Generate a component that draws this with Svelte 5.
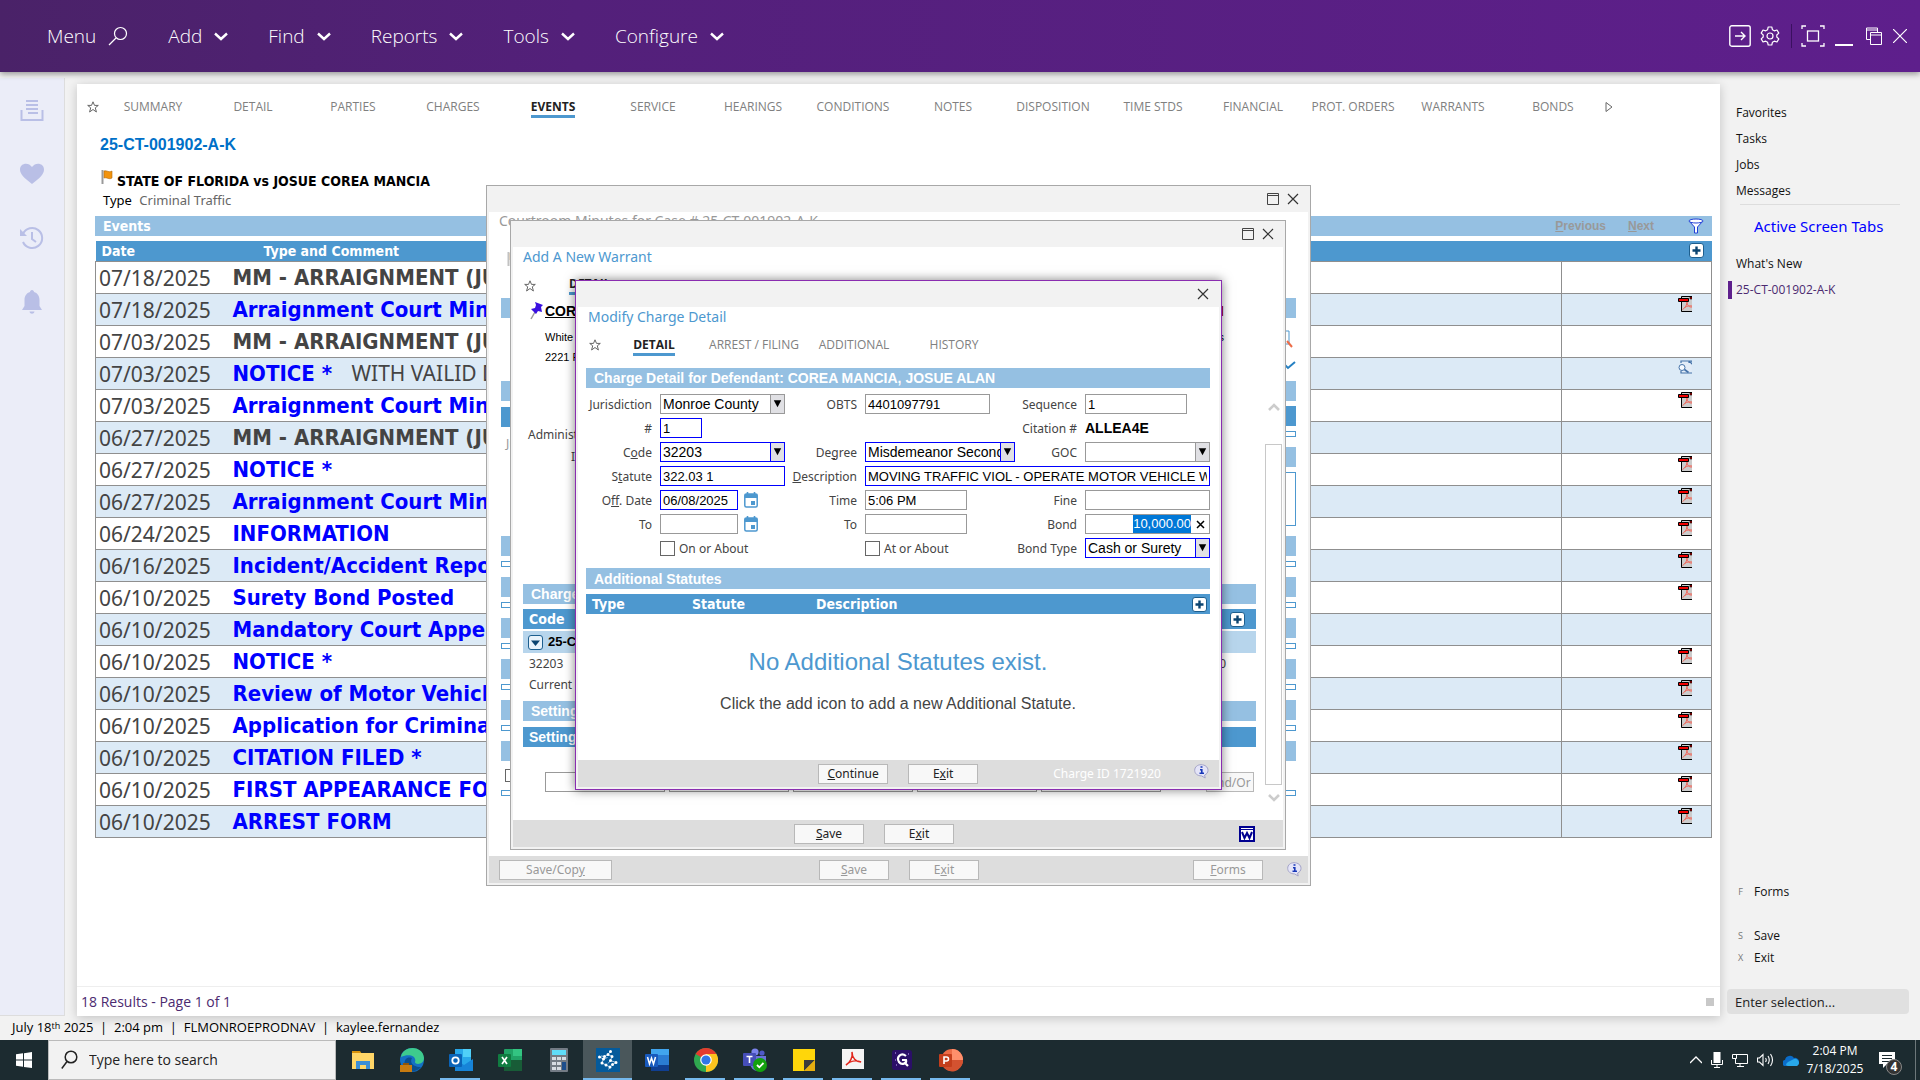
<script lang="ts">
    import { onMount } from 'svelte';

    const menus = ['Add', 'Find', 'Reports', 'Tools', 'Configure'];
    const tabs = [
        'SUMMARY', 'DETAIL', 'PARTIES', 'CHARGES', 'EVENTS', 'SERVICE', 'HEARINGS', 'CONDITIONS',
        'NOTES', 'DISPOSITION', 'TIME STDS', 'FINANCIAL', 'PROT. ORDERS', 'WARRANTS', 'BONDS'
    ];
    const chargeTabs = ['DETAIL', 'ARREST / FILING', 'ADDITIONAL', 'HISTORY'];

    type Row = { date: string; type: string; link?: boolean; comment?: string; icon?: 'pdf' | 'doc' };
    const events: Row[] = [
        { date: '07/18/2025', type: 'MM - ARRAIGNMENT (JUDGE)' },
        { date: '07/18/2025', type: 'Arraignment Court Minutes', link: true, icon: 'pdf' },
        { date: '07/03/2025', type: 'MM - ARRAIGNMENT (JUDGE)' },
        { date: '07/03/2025', type: 'NOTICE *', link: true, comment: 'WITH VAILID DL', icon: 'doc' },
        { date: '07/03/2025', type: 'Arraignment Court Minutes', link: true, icon: 'pdf' },
        { date: '06/27/2025', type: 'MM - ARRAIGNMENT (JUDGE)' },
        { date: '06/27/2025', type: 'NOTICE *', link: true, icon: 'pdf' },
        { date: '06/27/2025', type: 'Arraignment Court Minutes', link: true, icon: 'pdf' },
        { date: '06/24/2025', type: 'INFORMATION', link: true, icon: 'pdf' },
        { date: '06/16/2025', type: 'Incident/Accident Report', link: true, icon: 'pdf' },
        { date: '06/10/2025', type: 'Surety Bond Posted', link: true, icon: 'pdf' },
        { date: '06/10/2025', type: 'Mandatory Court Appearance', link: true },
        { date: '06/10/2025', type: 'NOTICE *', link: true, icon: 'pdf' },
        { date: '06/10/2025', type: 'Review of Motor Vehicle', link: true, icon: 'pdf' },
        { date: '06/10/2025', type: 'Application for Criminal', link: true, icon: 'pdf' },
        { date: '06/10/2025', type: 'CITATION FILED *', link: true, icon: 'pdf' },
        { date: '06/10/2025', type: 'FIRST APPEARANCE FORM', link: true, icon: 'pdf' },
        { date: '06/10/2025', type: 'ARREST FORM', link: true, icon: 'pdf' }
    ];

    const apps = [
        { name: 'File Explorer' },
        { name: 'Edge' },
        { name: 'Outlook', open: true },
        { name: 'Excel' },
        { name: 'Calculator' },
        { name: 'Court', open: true, active: true },
        { name: 'Word' },
        { name: 'Chrome', open: true },
        { name: 'Teams', open: true },
        { name: 'Sticky Notes', open: true },
        { name: 'Acrobat', open: true },
        { name: 'Gavel', open: true },
        { name: 'PowerPoint', open: true }
    ];

    let bond: HTMLInputElement;
    onMount(() => {
        bond.focus({ preventScroll: true });
        bond.select();
    });
</script>

{#snippet star()}
    <svg class="star" width="14" height="14" viewBox="0 0 14 14" fill="none" stroke="#666" aria-hidden="true">
        <path d="M7 1.8L8.5 5.4H12.3L9.3 7.8L10.4 12L7 9.5L3.6 12L4.7 7.8L1.7 5.4H5.5Z" />
    </svg>
{/snippet}

{#snippet close()}
    <svg width="12" height="12" viewBox="0 0 12 12" stroke="#333" stroke-width="1.2" aria-hidden="true"><path d="M1 1L11 11M11 1L1 11" /></svg>
{/snippet}

{#snippet maximize()}
    <svg width="12" height="12" viewBox="0 0 12 12" fill="none" stroke="#444" aria-hidden="true"><path d="M.5 .5H11.5V11.5H.5ZM.5 2.5H11.5" /></svg>
{/snippet}

{#snippet plus()}
    <svg width="15" height="15" viewBox="0 0 15 15" aria-hidden="true">
        <rect x=".5" y=".5" width="14" height="14" rx="2.5" fill="#fff" stroke="#1d5f8f" />
        <path d="M7.5 3.5V11.5M3.5 7.5H11.5" stroke="#0b4470" stroke-width="2.4" />
    </svg>
{/snippet}

{#snippet info()}
    <svg width="15" height="15" viewBox="0 0 15 15" aria-hidden="true">
        <path d="M7 .7C11 .7 14 3 14 6.3C14 8.7 12.5 10.3 10.6 11L11.2 14L7.5 11.9C3.5 11.9 .7 9.7 .7 6.3S3.5 .7 7 .7Z" fill="#e4e4f8" stroke="#a4a4c8" />
        <path d="M6.5 3H8.5M6 5.8H7.8V9.3M5.5 9.3H10" stroke="#1838b8" stroke-width="1.6" fill="none" />
    </svg>
{/snippet}

{#snippet flag()}
    <svg width="12" height="15" viewBox="0 0 12 15" aria-hidden="true">
        <path d="M1.500 0V14" stroke="#9a9a9a" stroke-width="2" />
        <path d="M3 1C6 0 8 3 11 1V8C8 10 6 7 3 8Z" fill="#f2930d" stroke="#b4690a" stroke-width=".6" />
    </svg>
{/snippet}

{#snippet arrow()}
    <svg class="arrow" viewBox="0 0 14 18" aria-hidden="true"><path d="M3 5H11L7 12.500Z" fill="#000" /></svg>
{/snippet}

{#snippet calendar()}
    <svg width="14" height="16" viewBox="0 0 14 16" aria-hidden="true">
        <path d="M3.500 0V3M10.500 0V3" stroke="#4d98cf" stroke-width="1.600" />
        <rect x=".8" y="2" width="12.400" height="13" rx="1.500" fill="#fff" stroke="#4d98cf" stroke-width="1.500" />
        <rect x=".8" y="2" width="12.400" height="4" fill="#4d98cf" /><rect x="7" y="9" width="4" height="4" fill="#4d98cf" />
    </svg>
{/snippet}

<div class="page">
    <header>
        <button class="menu search-menu">Menu
            <svg width="20" height="20" viewBox="0 0 20 20" fill="none" stroke="#fff" stroke-width="1.200"><circle cx="12.500" cy="7.500" r="6" /><path d="M8 12L1 19" /></svg>
        </button>
        {#each menus as menu}
            <button class="menu">{menu}
                <svg width="14" height="9" viewBox="0 0 14 9" fill="none" stroke="#fff" stroke-width="2.400"><path d="M1 1.500L7 7L13 1.500" /></svg>
            </button>
        {/each}
        <div class="window-tools">
            <svg width="22" height="22" viewBox="0 0 22 22" fill="none" stroke="#fff" stroke-width="1.400"><rect x=".8" y=".8" width="20.400" height="20.400" rx="2" /><path d="M6 11H16M12 7L16 11L12 15" /></svg>
            <svg class="gear" width="20" height="20" viewBox="0 0 20 20" fill="none" stroke="#fff" stroke-width="1.200" stroke-linejoin="round"><path d="M8.200 1H11.800L12.400 3.700L14.300 4.800L17 4L18.800 7.100L16.800 9V11L18.800 12.900L17 16L14.300 15.200L12.400 16.300L11.800 19H8.200L7.600 16.300L5.700 15.200L3 16L1.200 12.900L3.200 11V9L1.200 7.100L3 4L5.700 4.800L7.600 3.700Z" /><circle cx="10" cy="10" r="3" /></svg>
            <span class="divider"></span>
            <svg width="24" height="22" viewBox="0 0 24 22" fill="none" stroke="#fff" stroke-width="1.300"><path d="M1 4V1H5M19 1H23V4M23 18V21H19M5 21H1V18" /><rect x="6.500" y="6" width="11" height="10" /></svg>
            <svg class="minimize" width="18" height="22" viewBox="0 0 18 22" stroke="#fff" stroke-width="2"><path d="M0 20H18" /></svg>
            <svg class="restore" width="16" height="18" viewBox="0 0 16 18" fill="none" stroke="#fff"><path d="M4.500 12.500H.5V1H11.500V5.500M.5 3H11.500M4.500 5.500H15.500V17.500H4.500ZM4.500 8H15.500" /></svg>
            <svg class="quit" width="14" height="14" viewBox="0 0 14 14" stroke="#fff" stroke-width="1.200"><path d="M0 0L14 14M14 0L0 14" /></svg>
        </div>
    </header>

    <div class="workspace">
        <nav class="rail" aria-label="Shortcuts">
            <svg width="24" height="24" viewBox="0 0 24 24" fill="none" stroke="#b9bfe6" stroke-width="2"><path d="M6 3H18M6 7H18M6 11H18M8 15H18M1.500 12V22H22.500V12" /></svg>
            <svg width="24" height="24" viewBox="0 0 24 24" fill="#b9bfe6"><path d="M12 22C4 16 0 12 0 7.500C0 1 8.500-.5 12 5C15.500-.5 24 1 24 7.500C24 12 20 16 12 22Z" /></svg>
            <svg width="24" height="24" viewBox="0 0 24 24" fill="none" stroke="#b9bfe6" stroke-width="2"><path d="M3 8A10 10 0 1 1 3 16M12 6V13L16 16" /><path d="M0 3V10H7Z" fill="#b9bfe6" stroke="none" /></svg>
            <svg width="24" height="24" viewBox="0 0 24 24" fill="#b9bfe6"><path d="M12 0C13.200 0 14 1 14 2C17.500 3 19.500 6 19.500 10V16L22 20H2L4.500 16V10C4.500 6 6.500 3 10 2C10 1 10.800 0 12 0ZM9.500 21.500H14.500C14 24.500 10 24.500 9.500 21.500Z" /></svg>
        </nav>

        <main>
            <nav class="tabs" aria-label="Case">
                {@render star()}
                {#each tabs as tab}
                    <a href="#{tab}" class="tab" class:current={tab === 'EVENTS'}><span>{tab}</span></a>
                {/each}
                <svg class="more" width="8" height="12" viewBox="0 0 8 12" fill="none" stroke="#666"><path d="M1 1.500L7 6L1 10.500Z" /></svg>
            </nav>
            <h1>25-CT-001902-A-K</h1>
            <div class="case-name">{@render flag()}<b>STATE OF FLORIDA vs JOSUE COREA MANCIA</b></div>
            <div class="case-type">Type <span>Criminal Traffic</span></div>

            <section class="events">
                <div class="bar light">
                    Events
                    <div class="pager">
                        <button disabled><u>P</u>revious</button>
                        <button disabled><u>N</u>ext</button>
                        <svg width="16" height="16" viewBox="0 0 16 16" fill="#fff" stroke="#2040d8"><path d="M1 3L6.500 9V15H9.500V9L15 3" /><ellipse cx="8" cy="3" rx="7" ry="2" /></svg>
                    </div>
                </div>
                <table>
                    <thead>
                        <tr><th class="date">Date</th><th class="type">Type and Comment</th><th class="file">{@render plus()}</th></tr>
                    </thead>
                    <tbody>
                        {#each events as event}
                            <tr>
                                <td class="date">{event.date}</td>
                                <td class="type">
                                    {#if event.link}<a href="#event">{event.type}</a>{:else}<b>{event.type}</b>{/if}
                                    {#if event.comment}<span>{event.comment}</span>{/if}
                                </td>
                                <td class="file">
                                    {#if event.icon === 'pdf'}
                                        <svg width="14" height="16" viewBox="0 0 14 16"><path d="M3 0H14V16H3Z" fill="#ccc" /><path d="M14 .5H3.500V15.500H14" fill="none" stroke="#000" /><path d="M4.500 13.500C7.500 12 9 8.500 9 6C9 9 11 11.500 14 11M6.500 11.500C9 10 11.500 9.500 14 10" fill="none" stroke="#f0685c" /><path d="M.5 2.500H10.500V5.500H.5Z" fill="#f00000" stroke="#000" /><path d="M12 1H14V3H12Z" fill="#c00" stroke="#000" stroke-width=".6" /></svg>
                                    {:else if event.icon === 'doc'}
                                        <svg width="14" height="14" viewBox="0 0 14 14"><path d="M3.500 .5H11L13.500 3V13H3.500Z" fill="#e3ecf7" /><path d="M3 3V1H11V3M11 1L14 4V1ZM3 11V13H14" fill="none" stroke="#4472a8" stroke-width="1.200" /><circle cx="4" cy="7.500" r="3" fill="#f6faff" stroke="#4472a8" /><path d="M6.500 9.500L10.500 12.500" stroke="#4472a8" stroke-width="1.600" /></svg>
                                    {/if}
                                </td>
                            </tr>
                        {/each}
                    </tbody>
                </table>
            </section>
            <div class="results"><span>18 Results - Page 1 of 1</span><i></i></div>
        </main>

        <aside>
            <div class="links">
                <a href="#favorites">Favorites</a>
                <a href="#tasks">Tasks</a>
                <a href="#jobs">Jobs</a>
                <a href="#messages">Messages</a>
            </div>
            <hr />
            <h2>Active Screen Tabs</h2>
            <div class="links">
                <a href="#new">What's New</a>
                <a href="#case" class="selected">25-CT-001902-A-K</a>
            </div>
            <div class="commands">
                <button class="forms"><span>F</span>Forms</button>
                <button><span>S</span>Save</button>
                <button><span>X</span>Exit</button>
            </div>
            <input class="selection" aria-label="Enter selection" placeholder="Enter selection..." />
        </aside>
    </div>

    <div class="status">July 18<span class="th">th</span> 2025 &nbsp;|&nbsp; 2:04 pm &nbsp;|&nbsp; FLMONROEPRODNAV &nbsp;|&nbsp; kaylee.fernandez</div>

    <footer class="taskbar">
        <button class="start" aria-label="Start">
            <svg width="16" height="16" viewBox="0 0 16 16" fill="#fff"><path d="M0 2.300L7 1.300V7.600H0ZM8 1.200L16 0V7.600H8ZM0 8.500H7V14.800L0 13.800ZM8 8.500H16V16L8 14.900Z" /></svg>
        </button>
        <label class="search">
            <svg width="17" height="20" viewBox="0 0 17 20" fill="none" stroke="#222" stroke-width="1.500"><circle cx="10" cy="7" r="5.800" /><path d="M6 11.500L.8 18.500" /></svg>
            <input placeholder="Type here to search" />
        </label>
        <div class="apps">
            {#each apps as app}
                <button class="app" class:open={app.open} class:active={app.active} aria-label={app.name}>
                    <svg width="24" height="24" viewBox="0 0 24 24">
                        {#if app.name === 'File Explorer'}
                            <path d="M1 3H9L11 6H1Z" fill="#d9930b" /><path d="M1 5H23V21H1Z" fill="#ffd667" /><path d="M5 21V13H19V21H15V17H9V21Z" fill="#3c8fd6" />
                        {:else if app.name === 'Edge'}
                            <circle cx="12" cy="12" r="12" fill="#1470c4" /><path d="M1 9C3-3 23-3 24 10C24 17 15 17 15 14C17 8 9 5 1 9Z" fill="#3ecb8d" /><path d="M5 21C3 13 6 8 12 10C9 15 14 19 21 19C17 24 9 25 5 21Z" fill="#0b4f8f" /><rect y="17" width="12" height="7" fill="#c77b10" /><rect x="3" y="15" width="6" height="2" fill="#8f550a" />
                        {:else if app.name === 'Outlook'}
                            <rect x="6" y="1" width="16" height="16" fill="#28a8ea" /><rect x="14" y="1" width="8" height="8" fill="#50d0f8" /><path d="M6 11L15 17L24 11V23H6Z" fill="#1784d8" /><rect y="6" width="13" height="13" rx="1" fill="#0a64b8" /><circle cx="6.500" cy="12.500" r="3.200" fill="none" stroke="#fff" stroke-width="1.800" />
                        {:else if app.name === 'Excel'}
                            <rect x="6" y="1" width="18" height="22" rx="1" fill="#21a366" /><rect x="15" y="1" width="9" height="7" fill="#33c481" /><rect x="6" y="12" width="18" height="11" fill="#185c37" /><rect y="6" width="13" height="13" rx="1" fill="#107c41" /><path d="M4 9L9 16M9 9L4 16" stroke="#fff" stroke-width="1.700" />
                        {:else if app.name === 'Calculator'}
                            <rect x="3" width="18" height="24" rx="1" fill="#737b84" /><rect x="5" y="2" width="14" height="5" fill="#5fdcf8" /><path d="M5 9H9V12H5ZM10 9H14V12H10ZM15 9H19V12H15ZM5 14H9V17H5ZM10 14H14V17H10ZM5 19H9V22H5ZM10 19H14V22H10Z" fill="#d7dce2" /><rect x="15" y="14" width="4" height="8" fill="#1d4e8c" />
                        {:else if app.name === 'Court'}
                            <rect width="24" height="24" fill="#045a9b" />
                            <path d="M3.500 9L7.500 11L6 15L10 17L14 19L12.500 21.500M14.500 3.500L12 6.500L16 8.500L14.500 12.500L20 14.500L16.500 16.500M12 6.500L8.500 8.500L5 8M7.500 11L11.500 9.500M14.500 12.500L12 15.500" fill="none" stroke="#cfe3f2" stroke-width=".8" />
                            <path d="M3.500 9V9M7.500 11V11M6 15V15M10 17V17M14 19V19M14.500 3.500V3.500M12 6.500V6.500M16 8.500V8.500M14.500 12.500V12.500M20 14.500V14.500M16.500 16.500V16.500M8.500 8.500V8.500" stroke="#fff" stroke-width="3" stroke-linecap="round" />
                        {:else if app.name === 'Word'}
                            <rect x="6" y="1" width="18" height="22" rx="1" fill="#2b7cd3" /><rect x="6" y="1" width="18" height="6" fill="#41a5ee" /><rect x="6" y="17" width="18" height="6" fill="#103f91" /><rect y="6" width="13" height="13" rx="1" fill="#185abd" /><path d="M2.500 9L4.500 16L6.500 10L8.500 16L10.500 9" fill="none" stroke="#fff" stroke-width="1.500" />
                        {:else if app.name === 'Chrome'}
                            <circle cx="12" cy="12" r="12" fill="#2fa84f" /><path d="M12 12L1.600 6A12 12 0 0 1 22.400 6Z" fill="#e33b2e" /><path d="M12 12V24A12 12 0 0 0 22.400 6H12Z" fill="#fcc31e" /><circle cx="12" cy="12" r="5.800" fill="#fff" /><circle cx="12" cy="12" r="4.600" fill="#3076e8" />
                        {:else if app.name === 'Teams'}
                            <circle cx="12" cy="4" r="3.600" fill="#7b83eb" /><circle cx="19" cy="5" r="2.600" fill="#5059c9" /><path d="M7 8H23V15A8 8 0 0 1 7 15Z" fill="#6a72d8" /><rect y="5" width="13" height="13" rx="1" fill="#464eb8" /><path d="M3.500 8.500H9.500M6.500 8.500V15" stroke="#fff" stroke-width="1.600" /><circle cx="17" cy="17" r="7" fill="#13a10e" /><path d="M14 17L16.300 19.300L20.500 15" fill="none" stroke="#fff" stroke-width="1.800" />
                        {:else if app.name === 'Sticky Notes'}
                            <path d="M1 1H23V23H1Z" fill="#ffd60a" /><path d="M12 12H23L12 23Z" fill="#3b3b3b" /><path d="M23 12V23H12Z" fill="#e6ad10" />
                        {:else if app.name === 'Acrobat'}
                            <rect x="1" y="1" width="22" height="20" fill="#f4f4f4" /><path d="M5 17C9 15 12 9 11 4C11 10 15 14 20 14C15 12 9 13 5 17Z" fill="none" stroke="#e1251b" stroke-width="1.500" />
                        {:else if app.name === 'Gavel'}
                            <rect x="2" y="2" width="20" height="20" rx="3" fill="#2b0f68" /><path d="M16 8C11 4 6 9 9 14C12 18 17 15 16 12H12M15 15L18 18" fill="none" stroke="#fff" stroke-width="2.200" /><path d="M5 5H6M18 6H19M5 12H6M6 17H7" stroke="#c9a8ff" />
                        {:else}
                            <circle cx="13" cy="12" r="11" fill="#ed6c47" /><path d="M13 1A11 11 0 0 1 24 12H13Z" fill="#ff8f6b" /><path d="M2 12H24A11 11 0 0 1 3 17Z" fill="#d35230" /><rect y="6" width="13" height="13" rx="1" fill="#c43e1c" /><path d="M5 16V9H7.500A2 2 0 0 1 7.500 13H5" fill="none" stroke="#fff" stroke-width="1.600" />
                        {/if}
                    </svg>
                </button>
            {/each}
        </div>
        <div class="tray">
            <svg width="12" height="8" viewBox="0 0 12 8" fill="none" stroke="#fff" stroke-width="1.300"><path d="M0 7L6 1L12 7" /></svg>
            <svg width="12" height="16" viewBox="0 0 12 16" fill="none" stroke="#fff"><rect x="3" y=".5" width="6" height="10" fill="#fff" /><path d="M.5 8V12.500H11.500V8M6 12.500V15.500M3 15.500H9" /></svg>
            <svg width="16" height="14" viewBox="0 0 16 14" fill="none" stroke="#fff"><path d="M4 1.500H15.500V10.500H3.500V6M8 10.500V13.500M5 13.500H12M.5 1.500H4.500V5.500H.5Z" /></svg>
            <svg width="17" height="14" viewBox="0 0 17 14" fill="none" stroke="#fff" stroke-width="1.100"><path d="M.5 5H2.500L6 1.500V12.500L2.500 9H.5ZM8.500 5Q10 7 8.500 9M11 3Q13.500 7 11 11M13.500 1Q17.500 7 13.500 13" /></svg>
            <svg width="16" height="11" viewBox="0 0 16 11"><path d="M3 11A3 3 0 0 1 2 5A5 5 0 0 1 11 3A4 4 0 0 1 13 11Z" fill="#0a6cc8" /><path d="M5 11Q1 10 5 7L10 4.500A3.500 3.500 0 0 1 14 11Z" fill="#28a8ea" /></svg>
            <div class="clock">2:04 PM<br />7/18/2025</div>
            <div class="notices">
                <svg width="16" height="16" viewBox="0 0 16 16"><path d="M0 0H16V12H8L4 16V12H0Z" fill="#fff" /><path d="M3 3.500H13M3 6.500H13M3 9.500H10" stroke="#1c2b30" /></svg>
                <span>4</span>
            </div>
            <i class="peek"></i>
        </div>
    </footer>

    <div class="window minutes">
        <div class="titlebar">{@render maximize()}{@render close()}</div>
        <div class="body">
            <div class="minutes-title">Courtroom Minutes for Case # 25-CT-001902-A-K</div>
            <div class="minutes-flag">{@render flag()}</div>
            <div class="columns">
                <div class="strips">
                    <i class="light"></i><i class="light after-details"></i><i class="dark"></i>
                    <div class="judge">Judge</div>
                    {#each Array(5) as _}<i class="light"></i><i class="outline"></i>{/each}
                    <i class="light"></i>
                    <input type="checkbox" aria-label="Select all" disabled />
                    <i class="outline last"></i>
                </div>
                <div class="strips">
                    <i class="light"></i>
                    <div class="marks">
                        <svg width="12" height="18" viewBox="0 0 12 18" fill="none" stroke="#4d98cf"><path d="M0 1H5V14H0" /><path d="M3 11L8 17" stroke="#ed6c47" stroke-width="2" /></svg>
                        <svg width="12" height="9" viewBox="0 0 12 9" fill="none" stroke="#2680c2" stroke-width="2"><path d="M1 4L4 7L11 1" /></svg>
                    </div>
                    <i class="light"></i><i class="dark"></i><i class="outline"></i><i class="light"></i><i class="outline box"></i>
                    {#each Array(5) as _}<i class="light"></i><i class="outline"></i>{/each}
                    <i class="light"></i>
                    <i class="outline far"></i>
                </div>
            </div>
        </div>
        <div class="actions">
            <button class="button wide" disabled>Save/Cop<u>y</u></button>
            <div class="middle">
                <button class="button" disabled><u>S</u>ave</button>
                <button class="button" disabled>E<u>x</u>it</button>
            </div>
            <button class="button" disabled><u>F</u>orms</button>
            {@render info()}
        </div>
    </div>

    <div class="window warrant">
        <div class="titlebar">{@render maximize()}{@render close()}</div>
        <div class="body">
            <div class="content">
                <div class="title">Add A New Warrant</div>
                <div class="warrant-tabs">{@render star()}<b>DETAIL</b></div>
                <div class="person">
                    <svg width="14" height="18" viewBox="0 0 14 18"><path d="M5 10L1 17" stroke="#999" stroke-width="1.500" /><path d="M5 0L13 3L11 5L12 10L8 9L6 12L1 7L5 6L6 3Z" fill="#3a10e0" /></svg>
                    <a href="#person">COREA MANCIA</a>
                    <span class="hold">M</span>
                </div>
                <div class="facts">White <span>s</span></div>
                <div class="facts">2221 PATTERSON</div>
                <div class="admin">Administrative</div>
                <div class="issued">Issued</div>
                <div class="bar light arial">Charges</div>
                <div class="bar dark">Code {@render plus()}</div>
                <div class="bar group">
                    <svg width="15" height="15" viewBox="0 0 15 15"><rect x=".5" y=".5" width="14" height="14" rx="2.500" fill="#e9f3fb" stroke="#1d5f8f" /><path d="M3 5.500H12L7.500 11Z" fill="#0b4470" /></svg>
                    25-CT
                </div>
                <div class="charge">32203 <span>0</span></div>
                <div class="charge">Current Plea</div>
                <div class="bar light arial settings">Settings</div>
                <div class="bar dark arial settings">Setting</div>
                <div class="setting-fields">
                    <input aria-label="Setting" /><input aria-label="Date" /><input aria-label="Time" /><input aria-label="Room" /><input aria-label="Length" />
                    <button class="button" disabled>And/Or</button>
                </div>
            </div>
            <div class="scrollbar">
                <svg width="12" height="9" viewBox="0 0 12 9" fill="none" stroke="#ccc" stroke-width="2.600"><path d="M1 7L6 2L11 7" /></svg>
                <i></i>
                <svg width="12" height="9" viewBox="0 0 12 9" fill="none" stroke="#ccc" stroke-width="2.600"><path d="M1 2L6 7L11 2" /></svg>
            </div>
        </div>
        <div class="actions">
            <div class="middle">
                <button class="button"><u>S</u>ave</button>
                <button class="button">E<u>x</u>it</button>
            </div>
            <svg class="word" width="16" height="16" viewBox="0 0 16 16"><rect x="1" y="1" width="14" height="14" fill="#fff" stroke="#000090" stroke-width="2" /><path d="M2 3.500H14" stroke="#000090" /><path d="M3 6L5.500 12L8 7L10.500 12L13 6" fill="none" stroke="#000090" stroke-width="2" /></svg>
        </div>
    </div>

    <div class="window charge-detail" role="dialog" aria-label="Modify Charge Detail">
        <div class="titlebar">{@render close()}</div>
        <div class="body">
            <div class="title">Modify Charge Detail</div>
            <nav class="tabs" aria-label="Charge">
                {@render star()}
                {#each chargeTabs as tab}
                    <a href="#{tab}" class="tab" class:current={tab === 'DETAIL'}><span>{tab}</span></a>
                {/each}
            </nav>
            <div class="bar light arial">Charge Detail for Defendant: COREA MANCIA, JOSUE ALAN</div>
            <form>
                <label for="jurisdiction">Jurisdiction</label>
                <span class="select"><select id="jurisdiction"><option>Monroe County</option></select>{@render arrow()}</span>
                <label for="obts">OBTS</label>
                <input id="obts" class="mid" value="4401097791" />
                <label for="sequence">Sequence</label>
                <input id="sequence" class="time" value="1" />

                <label for="number">#</label>
                <input id="number" class="number required" value="1" />
                <label class="citation" for="citation">Citation #</label>
                <output id="citation">ALLEA4E</output>

                <label for="code">C<u>o</u>de</label>
                <span class="select required"><select id="code"><option>32203</option></select>{@render arrow()}</span>
                <label for="degree">De<u>g</u>ree</label>
                <span class="select required"><select id="degree"><option>Misdemeanor Second Degree</option></select>{@render arrow()}</span>
                <label for="goc">GOC</label>
                <span class="select"><select id="goc"><option></option></select>{@render arrow()}</span>

                <label for="statute">S<u>t</u>atute</label>
                <input id="statute" class="required" value="322.03 1" />
                <label for="description"><u>D</u>escription</label>
                <input id="description" class="description required" value="MOVING TRAFFIC VIOL - OPERATE MOTOR VEHICLE WITHOUT VALID LICENSE" />

                <label for="off-date">O<u>f</u>f. Date</label>
                <div class="date-field"><input id="off-date" class="required" value="06/08/2025" />{@render calendar()}</div>
                <label for="time">Time</label>
                <input id="time" class="time" value="5:06 PM" />
                <label for="fine">Fine</label>
                <input id="fine" />

                <label for="to-date">To</label>
                <div class="date-field"><input id="to-date" />{@render calendar()}</div>
                <label for="to-time">To</label>
                <input id="to-time" class="time" />
                <label for="bond">Bond</label>
                <div class="clearable">
                    <input id="bond" bind:this={bond} value="10,000.00" />
                    <button type="button" aria-label="Clear"><svg width="9" height="9" viewBox="0 0 9 9" stroke="#000" stroke-width="1.500"><path d="M1 1L8 8M8 1L1 8" /></svg></button>
                </div>

                <label class="check on-about"><input type="checkbox" />On or About</label>
                <label class="check at-about"><input type="checkbox" />At or About</label>
                <label for="bond-type">Bond Type</label>
                <span class="select required"><select id="bond-type"><option>Cash or Surety</option></select>{@render arrow()}</span>
            </form>
            <div class="bar light arial statutes">Additional Statutes</div>
            <div class="bar dark statute-head"><span>Type</span><span>Statute</span><span>Description</span>{@render plus()}</div>
            <div class="empty">
                <strong>No Additional Statutes exist.</strong>
                <p>Click the add icon to add a new Additional Statute.</p>
            </div>
        </div>
        <div class="actions">
            <div class="middle">
                <button class="button"><u>C</u>ontinue</button>
                <button class="button">E<u>x</u>it</button>
            </div>
            <span class="charge-id">Charge ID 1721920</span>
            {@render info()}
        </div>
    </div>
</div>

<style>
:global(body) {
    margin: 0;
    background: #f2f2f2;
}
.page {
    --ui: "Open Sans", "Segoe UI", sans-serif;
    --form: "Noto Sans", Tahoma, sans-serif;
    --form-bold: "DejaVu Sans Condensed", Tahoma, sans-serif;
    --arial: "Liberation Sans", Arial, sans-serif;
    position: relative;
    display: flex;
    flex-direction: column;
    min-height: 100vh;
    overflow: hidden;
    font: 12px/16px var(--form);
    color: #444;
    background: #f2f2f2;
}
.page :global(*) {
    box-sizing: border-box;
}
svg {
    flex: none;
    display: block;
}
a {
    text-decoration: none;
    color: inherit;
}
button {
    font: inherit;
    color: inherit;
    border: 0;
    padding: 0;
    background: none;
}
input {
    font: 13px/18px var(--arial);
    color: #000;
    min-width: 0;
}

header {
    display: flex;
    align-items: center;
    gap: 40px;
    height: 72px;
    padding: 0 13px 0 47px;
    background: linear-gradient(90deg, #4a2268, #53207a 30%, #5e1f8c);
    box-shadow: 0 2px 6px rgba(0, 0, 0, 0.4);
    z-index: 1;
}
.menu {
    display: flex;
    align-items: center;
    gap: 12px;
    font: 300 19px/26px var(--ui);
    color: #fff;
}
.window-tools {
    display: flex;
    align-items: center;
    margin-left: auto;
}
.gear {
    margin-left: 9px;
}
.divider {
    width: 1px;
    height: 24px;
    margin: 0 9px 0 11px;
    background: #3a1060;
}
.minimize {
    margin: 0 13px 0 10px;
}
.quit {
    margin-left: 11px;
}

.workspace {
    display: flex;
    flex: 1;
    min-height: 0;
}
.rail {
    display: flex;
    flex-direction: column;
    align-items: center;
    gap: 40px;
    width: 65px;
    margin-top: 6px;
    padding-top: 20px;
    background: #ebedf8;
    border-right: 1px solid #ddd;
    border-bottom: 1px solid #ddd;
}
main {
    display: flex;
    flex-direction: column;
    flex: 1;
    min-width: 0;
    margin: 12px 0 0 12px;
    background: #fff;
    box-shadow: 0 2px 10px rgba(0, 0, 0, 0.2);
}
.tabs {
    display: flex;
    align-items: center;
    height: 46px;
    padding-left: 9px;
    font: 12px/16px var(--ui);
    color: #808080;
}
.tab {
    width: 100px;
    text-align: center;
    white-space: nowrap;
}
main .star {
    margin-right: 3px;
}
.tab span {
    display: inline-block;
    padding: 3px 0 0;
    border-bottom: 3px solid transparent;
}
.tab.current span {
    font-weight: 700;
    color: #222;
    border-color: #4d98cf;
}
.more {
    margin-left: 2px;
}
h1 {
    margin: 5px 0 0 23px;
    font: bold 16px/20px var(--arial);
    color: #0070c8;
}
.case-name {
    display: flex;
    align-items: center;
    gap: 4px;
    margin: 15px 0 0 24px;
    font: 14px/22px var(--form-bold);
    color: #000;
}
.case-name svg {
    align-self: flex-start;
}
.case-type {
    margin: 0 0 8px 26px;
    font-size: 13px;
    color: #000;
}
.case-type span {
    margin-left: 4px;
    color: #666;
}
.events {
    margin: 0 8px 0 18px;
}
.bar {
    display: flex;
    align-items: center;
    height: 20px;
    padding-left: 8px;
    font: bold 14px/16px var(--form-bold);
    color: #fff;
}
.light {
    background: #95c0e2;
}
.dark {
    background: #4d98cf;
}
.pager {
    display: flex;
    align-items: center;
    gap: 22px;
    margin-left: auto;
    padding-right: 8px;
    font: bold 12px/16px var(--arial);
    color: #999;
    text-shadow: 1px 1px #fff;
}
.pager svg {
    margin-left: 12px;
}
table {
    width: 100%;
    margin-top: 5px;
    border-collapse: collapse;
    table-layout: fixed;
}
th {
    height: 20px;
    padding: 0 0 0 6px;
    font: bold 14px/16px var(--form-bold);
    text-align: left;
    color: #fff;
    background: #4d98cf;
}
td {
    height: 32px;
    padding: 1px 0 0 3px;
    font-size: 21px;
    line-height: 28px;
    white-space: nowrap;
    overflow: hidden;
    border-bottom: 1px solid #8f8f8f;
}
tbody tr:first-child td {
    border-top: 1px solid #8f8f8f;
}
td.date {
    border-left: 1px solid #8f8f8f;
}
td.file {
    border-left: 1px solid #8f8f8f;
    border-right: 1px solid #8f8f8f;
    vertical-align: top;
}
tr:nth-child(even) td {
    background: #dceaf6;
}
.date {
    width: 134px;
}
th.type {
    padding-left: 34px;
}
.file {
    width: 150px;
}
.file svg {
    margin: 0 8px 0 auto;
}
td.file svg {
    margin: 1px 19px 0 auto;
}
td a, td b {
    font: bold 22px/28px var(--form-bold);
}
td a {
    color: #00f;
}
td span {
    margin-left: 14px;
}
.results {
    display: flex;
    align-items: center;
    justify-content: space-between;
    height: 30px;
    margin-top: auto;
    padding: 0 6px 0 4px;
    border-top: 1px solid #eee;
    font: 14px/18px var(--ui);
    color: #4b2a70;
}
.results i {
    width: 8px;
    height: 8px;
    background: #c8c8c8;
}

aside {
    display: flex;
    flex-direction: column;
    width: 200px;
    padding: 32px 11px 2px 7px;
    font: 12px/18px var(--ui);
    color: #111;
}
.links a {
    display: block;
    margin-bottom: 8px;
    padding-left: 9px;
}
.links .selected {
    margin-left: 1px;
    padding-left: 4px;
    border-left: 4px solid #5e1f8c;
    color: #4b2a70;
}
aside hr {
    width: 160px;
    margin: -4px 0 0 13px;
    border: 0;
    border-top: 1px solid #ddd;
}
h2 {
    margin: 11px 0 19px 27px;
    font: 15px/20px var(--form);
    color: #00f;
}
.commands {
    margin-top: auto;
    margin-bottom: 20px;
}
.commands button {
    display: flex;
    gap: 10px;
    height: 22px;
    line-height: 22px;
    padding-left: 10px;
}
.commands .forms {
    margin-bottom: 22px;
}
.commands span {
    width: 7px;
    font-size: 9px;
    color: #777;
}
.selection {
    height: 25px;
    padding: 0 8px;
    border: 0;
    border-radius: 4px;
    font: 13px/18px var(--ui);
    background: #e0e0e0;
}
input::placeholder {
    color: #222;
    opacity: 1;
}
.status {
    height: 24px;
    padding-left: 12px;
    font: 13px/22px var(--ui);
    color: #000;
    white-space: nowrap;
}
.th {
    font-size: 9px;
    vertical-align: 3px;
    line-height: 1;
}

.taskbar {
    display: flex;
    height: 40px;
    background: #1c2b30;
    color: #fff;
}
.start {
    display: grid;
    place-items: center;
    width: 48px;
}
.search {
    display: flex;
    align-items: center;
    gap: 11px;
    width: 288px;
    padding-left: 12px;
    background: #f2f2f2;
    border: 1px solid #bbb;
}
.search input {
    width: 220px;
    border: 0;
    padding: 0;
    background: none;
    font: 14px/20px var(--ui);
}
.apps {
    display: flex;
    margin-left: 2px;
}
.app {
    display: grid;
    place-items: center;
    position: relative;
    width: 49px;
    height: 40px;
}
.app.open::after {
    content: "";
    position: absolute;
    bottom: 0;
    left: 4px;
    right: 5px;
    height: 2px;
    background: #76b9ed;
}
.app.active {
    background: #4a575b;
}
.app.active::after {
    left: 0;
    right: 0;
}
.tray {
    display: flex;
    align-items: center;
    gap: 9px;
    margin-left: auto;
    padding-right: 4px;
}
.clock {
    width: 68px;
    margin-left: -7px;
    font: 12px/18px var(--ui);
    text-align: center;
}
.notices {
    position: relative;
    margin-left: 1px;
    width: 24px;
}
.notices span {
    position: absolute;
    top: 7px;
    left: 7px;
    width: 16px;
    height: 16px;
    border: 1px solid #888;
    border-radius: 50%;
    font: bold 12px/14px var(--ui);
    text-align: center;
    background: #333;
}
.peek {
    width: 1px;
    height: 40px;
    margin-left: 3px;
    background: #6d777a;
}

.window {
    position: absolute;
    z-index: 2;
    display: flex;
    flex-direction: column;
    border: 1px solid #a8a8a8;
    background: #f2f2f2;
    padding: 0 2px 2px;
    white-space: nowrap;
}
.minutes {
    left: 486px;
    top: 185px;
    width: 825px;
    height: 701px;
}
.warrant {
    left: 510px;
    top: 220px;
    width: 776px;
    height: 630px;
}
.charge-detail {
    left: 575px;
    top: 280px;
    width: 647px;
    height: 510px;
    border-color: #8a2db0;
    box-shadow: 0 0 10px rgba(0, 0, 0, 0.5);
}
.titlebar {
    display: flex;
    align-items: center;
    justify-content: flex-end;
    gap: 8px;
    height: 26px;
    padding-right: 9px;
}
.charge-detail .titlebar {
    padding-right: 10px;
}
.window .body {
    flex: 1;
    min-height: 0;
    padding: 1px 12px 0;
    overflow: hidden;
    background: #fff;
}
.actions {
    display: flex;
    align-items: center;
    position: relative;
    height: 27px;
    padding: 0 6px 0 10px;
    background: #ddd;
}
.button {
    width: 70px;
    height: 20px;
    padding-top: 1px;
    font-size: 12px;
    line-height: 16px;
    color: #222;
    background: #f8f8f8;
    border: 1px solid #b8b8b8;
}
.button:disabled {
    color: #999;
}
.button.wide {
    width: 113px;
}
.middle {
    display: flex;
    gap: 20px;
    margin: 0 auto;
}
.title {
    font-size: 14px;
    line-height: 18px;
    color: #4d98cf;
}

.minutes .body {
    padding: 0 12px 0 10px;
}
.minutes-title {
    height: 40px;
    font-size: 14px;
    line-height: 18px;
    color: #999;
}
.minutes-flag {
    height: 46px;
    padding-left: 8px;
    opacity: 0.6;
}
.columns {
    display: flex;
    padding-left: 2px;
}
.strips {
    flex: 1;
}
.strips i {
    display: block;
    height: 20px;
}
.strips .light {
    margin-bottom: 5px;
}
.strips .after-details {
    margin-top: 63px;
    margin-bottom: 6px;
}
.strips .outline {
    height: 6px;
    margin-bottom: 10px;
    border: 1px solid #4d98cf;
}
.strips .dark {
    margin-bottom: 5px;
}
.strips .box {
    height: 54px;
}
.judge {
    height: 104px;
    padding: 4px 0 0 5px;
    color: #999;
}
.marks {
    display: flex;
    flex-direction: column;
    align-items: flex-end;
    gap: 13px;
    height: 58px;
    padding: 7px 0 0;
}
.strips .far {
    margin-top: 29px;
}
.minutes .middle {
    margin: 0 214px 0 auto;
}
.minutes .actions svg {
    margin-left: 24px;
}

.warrant .body {
    display: flex;
    padding: 1px 1px 0 10px;
}
.content {
    flex: 1;
}
.warrant-tabs {
    display: flex;
    align-items: center;
    gap: 32px;
    height: 32px;
    padding-top: 7px;
    color: #222;
}
.warrant-tabs b {
    font: bold 12px/16px var(--ui);
    border-bottom: 3px solid #4d98cf;
}
.person {
    display: flex;
    align-items: center;
    gap: 1px;
    height: 26px;
    padding-left: 7px;
    font: bold 14px/18px var(--arial);
}
.person a {
    color: #000;
    text-decoration: underline;
}
.hold {
    margin-left: auto;
    margin-right: 32px;
    color: #a00;
}
.facts, .charge {
    display: flex;
    justify-content: space-between;
    height: 20px;
    padding: 4px 32px 0 22px;
    font: 11px/18px var(--arial);
    color: #000;
}
.admin {
    margin-top: 63px;
    padding-left: 5px;
    height: 22px;
}
.issued {
    height: 135px;
    padding-left: 48px;
}
.warrant .dark {
    margin-top: 5px;
    padding-left: 6px;
}
.warrant .dark svg {
    margin-left: auto;
    margin-right: 11px;
}
.warrant .group {
    gap: 5px;
    height: 22px;
    margin-top: 2px;
    padding-left: 5px;
    font: bold 13px/18px var(--arial);
    color: #000;
    background: #b7d5ec;
}
.charge {
    height: 21px;
    padding: 3px 30px 0 6px;
    font: 12px/16px var(--form);
    color: #444;
}
.warrant .settings {
    margin-top: 6px;
}
.setting-fields {
    display: flex;
    gap: 4px;
    padding: 25px 2px 0 22px;
}
.setting-fields input {
    width: 120px;
    height: 20px;
    border: 1px solid #999;
}
.setting-fields .button {
    width: 48px;
    margin-left: auto;
}
.scrollbar {
    display: flex;
    flex-direction: column;
    align-items: center;
    width: 17px;
    margin-left: 9px;
    padding: 155px 0 18px;
    gap: 8px;
}
.scrollbar i {
    flex: 1;
    width: 17px;
    margin-top: 24px;
    border: 1px solid #c8c8c8;
}
.warrant .middle {
    margin: 0 auto 0 271px;
}
.word {
    margin-right: 22px;
}

.charge-detail .body {
    padding: 1px 9px 0 8px;
}
.charge-detail .title {
    padding-left: 2px;
}
.charge-detail .tabs {
    height: 38px;
    margin-bottom: 4px;
    padding-left: 2px;
}
.charge-detail .star {
    margin-right: 2px;
}
.bar.arial {
    font-family: var(--arial);
}
form {
    display: grid;
    grid-template-columns: 66px 125px 64px 150px 54px 1fr;
    grid-auto-rows: 20px;
    gap: 4px 8px;
    align-items: center;
    margin: 6px 0 10px;
}
form label {
    justify-self: end;
    padding-top: 1px;
}
form input {
    width: 100%;
    height: 20px;
    padding: 0 2px;
    border: 1px solid #999;
    border-radius: 0;
    outline: 0;
}
form .mid {
    width: 125px;
}
form .time {
    width: 102px;
}
form .number {
    width: 42px;
}
form .description {
    grid-column: 4 / 7;
}
form .citation {
    grid-column: 5;
}
form .required, .required .arrow {
    border-color: #00f;
}
output {
    font: bold 14px/18px var(--arial);
    color: #000;
}
.select {
    position: relative;
    width: 100%;
    height: 20px;
    border: 1px solid #999;
    background: #fff;
}
.select select {
    display: block;
    width: 100%;
    height: 18px;
    padding: 1px 14px 0 2px;
    border: 0;
    border-radius: 0;
    appearance: none;
    background: none;
    font: 14px/17px var(--arial);
    color: #000;
}
.arrow {
    position: absolute;
    top: 0;
    right: 0;
    width: 14px;
    height: 18px;
    border-left: 1px solid #999;
    background: #e0e0e4;
    pointer-events: none;
}
.date-field {
    display: flex;
    align-items: center;
    gap: 6px;
}
.date-field input {
    width: 78px;
}
.clearable {
    display: flex;
    align-items: center;
    height: 20px;
    padding-right: 4px;
    border: 1px solid #999;
}
.clearable input {
    height: 18px;
    border: 0;
    text-align: right;
}
.clearable input::selection {
    color: #fff;
    background: #0078d7;
}
.clearable button {
    padding-left: 3px;
}
.check {
    display: flex;
    align-items: center;
    gap: 4px;
    justify-self: start;
}
.on-about {
    grid-column: 2 / 4;
}
form .check input, .strips input {
    display: block;
    width: 15px;
    height: 15px;
    margin: 0;
    padding: 0;
    border: 1px solid #666;
    background: #fff;
    appearance: none;
}
.strips input {
    height: 13px;
    margin: 8px 0 8px 4px;
}
.charge-detail .statutes {
    height: 21px;
}
.statute-head {
    margin-top: 5px;
    padding-left: 6px;
}
.statute-head span:nth-child(1) {
    width: 100px;
}
.statute-head span:nth-child(2) {
    width: 124px;
}
.statute-head svg {
    margin-left: auto;
    margin-right: 3px;
}
.empty {
    margin-top: 33px;
    font: 16px/22px var(--arial);
    text-align: center;
}
.empty strong {
    font-weight: 400;
    font-size: 24px;
    line-height: 30px;
    color: #4d98cf;
}
.empty p {
    margin: 16px 0 0;
}
.charge-detail .middle {
    margin: 0 75px 0 auto;
}
.charge-id {
    color: #fff;
}
.charge-detail .actions {
    padding-right: 10px;
}
.charge-detail .actions svg {
    margin-left: 33px;
    margin-bottom: 4px;
}
</style>
